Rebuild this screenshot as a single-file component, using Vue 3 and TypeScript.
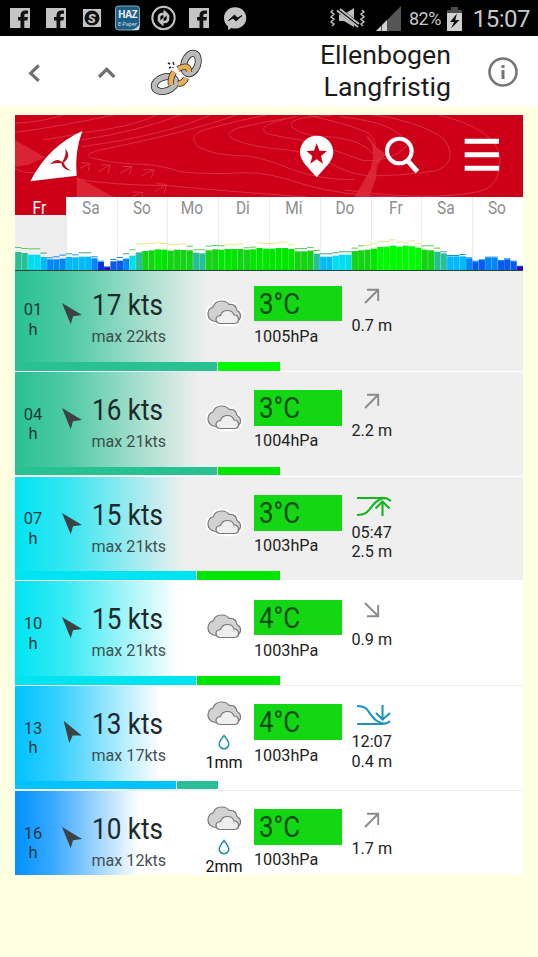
<script setup lang="ts">
interface Slot {
  hour: string
  dir: number
  wind: number
  gust: number
  color: string
  fade: number
  windBar: number
  gustBar: number
  gustColor: string
  rain?: string
  temp: number
  hpa: number
  tide: 'up' | 'down' | 'high' | 'low'
  tideTime?: string
  level: string
  night: boolean
}

const slots: Slot[] = [
  { hour: '01', dir: 0, wind: 17, gust: 22, color: '#28c191', fade: 192, windBar: 202, gustBar: 61.5, gustColor: '#00fa00', temp: 3, hpa: 1005, tide: 'up', level: '0.7 m', night: true },
  { hour: '04', dir: 0, wind: 16, gust: 21, color: '#28c191', fade: 184, windBar: 202, gustBar: 61.5, gustColor: '#00e600', temp: 3, hpa: 1004, tide: 'up', level: '2.2 m', night: true },
  { hour: '07', dir: 0, wind: 15, gust: 21, color: '#00e4f2', fade: 170, windBar: 181, gustBar: 82.5, gustColor: '#00e600', temp: 3, hpa: 1003, tide: 'high', tideTime: '05:47', level: '2.5 m', night: true },
  { hour: '10', dir: 0, wind: 15, gust: 21, color: '#00e4f2', fade: 164, windBar: 181, gustBar: 82.5, gustColor: '#00e600', temp: 4, hpa: 1003, tide: 'down', level: '0.9 m', night: false },
  { hour: '13', dir: 8, wind: 13, gust: 17, color: '#00c3ff', fade: 146, windBar: 161, gustBar: 40.5, gustColor: '#28be96', rain: '1mm', temp: 4, hpa: 1003, tide: 'low', tideTime: '12:07', level: '0.4 m', night: false },
  { hour: '16', dir: 0, wind: 10, gust: 12, color: '#0091ff', fade: 124, windBar: 120, gustBar: 20, gustColor: '#0091ff', rain: '2mm', temp: 3, hpa: 1003, tide: 'up', level: '1.7 m', night: false },
]

const days = ['Fr', 'Sa', 'So', 'Mo', 'Di', 'Mi', 'Do', 'Fr', 'Sa', 'So']

const palette: Record<string, string> = {
  t: '#28be96', c: '#00dcf0', s: '#00b9ff', b: '#0087f5', r: '#0a5af0', d: '#0a32dc', p: '#3c00b4',
  g: '#14d214', h: '#00e600', l: '#00fa00', y: '#e6e678', q: '#50c850',
}

const speeds = [
  54, 51, 46, 46, 39, 32, 32, 34, 39, 38, 40, 40, 35, 24, 9, 26, 28, 34, 43, 53, 57, 59, 62, 61, 58, 61, 60, 59, 52, 50, 59, 62,
  61, 63, 63, 63, 61, 62, 66, 64, 64, 66, 66, 63, 56, 56, 58, 49, 40, 40, 43, 46, 46, 57, 59, 61, 64, 69, 70, 73, 70, 73, 71, 67,
  61, 59, 55, 50, 41, 41, 41, 35, 25, 30, 37, 37, 28, 32, 26, 12,
]
const colorKeys = 'ttccsbbbssssbdprrbct' + 'gghhggggttgghhhgghhh' + 'hhhhgggtsscccggghlll' + 'llllggttsssbrrbbrrrp'

const gustHeights = [
  69, 66, 65, 65, 52, 38, 41, 46, 50, 47, 53, 53, 41, 28, 11, 33, 39, 50, 62, 80, 80, 81, 83, 81, 77, 78, 80, 73, 62, 62, 73, 75,
  74, 77, 77, 79, 68, 70, 83, 81, 81, 83, 85, 77, 66, 66, 69, 60, 50, 50, 53, 56, 56, 67, 74, 76, 80, 86, 87, 92, 85, 83, 89, 80,
  74, 74, 67, 56, 45, 45, 48, 38, 28, 32, 40, 40, 30, 35, 28, 13,
]

const bars = speeds.map((h, i) => ({ h, color: palette[colorKeys[i]], gust: gustHeights[i] }))
const gustColor = (v: number): string => (v > 75 ? palette.y : v > 58 ? palette.q : v > 48 ? '#28a07d' : palette.b)
</script>

<template>
  <div class="screen">
    <div class="status">
      <svg class="status-icons" viewBox="0 0 245 36">
        <g v-for="x in [10, 46, 189]" :key="x" :transform="`translate(${x} 8)`">
          <rect width="20" height="20" fill="#c4c4c4" />
          <path d="M10.500 20v-7.500H8V9h2.500V7.500q0-5 5-5H18v3.300h-2q-1.700 0-1.700 1.700V9H18l-.6 3.500h-3.100V20z" fill="#111" />
        </g>
        <rect x="83" y="9" width="18" height="18" fill="#c4c4c4" />
        <circle cx="92" cy="18" r="7.500" fill="#111" />
        <text x="87.800" y="23" class="s-mark">S</text>
        <rect x="115.500" y="6" width="24" height="24" rx="3" fill="#1d6084" stroke="#8aa9ba" />
        <text x="118" y="17.500" class="haz" textLength="19.500">HAZ</text>
        <text x="118" y="25.700" class="paper" textLength="19">E-Paper</text>
        <path d="M131 30q5-1 8-5v5z" fill="#c9d4da" />
        <circle cx="163.500" cy="18" r="11.200" fill="none" stroke="#c4c4c4" stroke-width="2" />
        <path d="M159 21.500v-4q0-3.500 3.500-3.500h2M168 14.500v4q0 3.500-3.500 3.500h-2" fill="none" stroke="#c4c4c4" stroke-width="2.600" />
        <path d="M163.500 9.500l5 4.500-5 4.500zM163.500 17.500l-5 4.500 5 4.500z" fill="#c4c4c4" />
        <path d="M235 7.200c6.500 0 11.300 4.700 11.300 10.700S241.500 28.500 235 28.500q-2 0-3.500-.5l-3.500 2v-3.500c-2.500-2-4-5-4-8.500C224 12 228.700 7.200 235 7.200z" fill="#c4c4c4" />
        <path d="M228.500 20.500l6-5.500 3 3 4.500-2.500-6 5.500-3-3z" fill="#111" stroke="#111" />
      </svg>
      <div class="status-right">
        <svg class="mute" viewBox="0 0 36 24">
          <path d="M9 8.500h5L24 2v19l-10-6H9z" fill="#bdbdbd" />
          <path d="M8 3.500l20 15" stroke="#000" stroke-width="5" />
          <path d="M7 4.500l21 16.500M10 3l19 15" stroke="#bdbdbd" stroke-width="2" />
          <path d="M3 4l-2 2 3 2-3 3 3 2-3 3 3 2-2 2M32 4l2 2-3 2 3 3-3 2 3 3-3 2 2 2" fill="none" stroke="#bdbdbd" stroke-width="1.500" />
        </svg>
        <svg class="signal" viewBox="0 0 25 25">
          <path d="M0 25L25 0v25z" fill="#555" /><path d="M0 25l5-5v5zM6 25v-6l5-5v11z" fill="#d2d2d2" />
        </svg>
        <span class="pct">82%</span>
        <svg class="battery" viewBox="0 0 15 24">
          <path d="M4 0h7v3h4v5H0V3h4z" fill="#4c4c4c" /><path d="M0 6h15v18H0z" fill="#d0d0d0" />
          <path d="M10 6.500L3 15h4l-3 6.500L12.500 13H8.300z" fill="#111" />
        </svg>
        <span class="clock">15:07</span>
      </div>
    </div>

    <header class="appbar">
      <svg class="nav" viewBox="0 0 190 71">
        <path d="M38.700 29.500l-8 7.700 8 7.700M99 41l7.700-7.700 7.700 7.700" fill="none" stroke="#707070" stroke-width="3.200" />
        <g fill="none">
          <ellipse cx="191" cy="27.500" rx="6.800" ry="10.500" transform="rotate(20 191 27.500)" stroke="#222" stroke-width="7" />
          <ellipse cx="191" cy="27.500" rx="6.800" ry="10.500" transform="rotate(20 191 27.500)" stroke="#b9babc" stroke-width="5.400" />
          <ellipse cx="165" cy="48" rx="11" ry="7" transform="rotate(-18 165 48)" stroke="#222" stroke-width="7" />
          <ellipse cx="165" cy="48" rx="11" ry="7" transform="rotate(-18 165 48)" stroke="#b9babc" stroke-width="5.400" />
          <path d="M174 36q-4 6-3 13M178 33q11-6 11 3M178 48q6-1 8-6" stroke="#333" stroke-width="6.400" />
          <path d="M174 36q-4 6-3 13M178 33q11-6 11 3M178 48q6-1 8-6" stroke="#e9ad59" stroke-width="4.800" />
          <path d="M168 27l2 1M173 26l1 3M169 32l2-1M173 31v1" stroke="#222" stroke-width="1.400" />
        </g>
      </svg>
      <h1 class="title"><span>Ellenbogen</span><span>Langfristig</span></h1>
      <svg class="info" viewBox="0 0 30 30">
        <circle cx="15" cy="15" r="13.500" fill="none" stroke="#757575" stroke-width="2.600" />
        <path d="M13.500 8h3v3h-3zM13.500 13h3v9h-3z" fill="#757575" />
      </svg>
    </header>

    <main class="panel">
      <svg class="banner" viewBox="45 30 1524 246" preserveAspectRatio="none">
        <rect x="45" y="30" width="1524" height="246" fill="#ce0019" />
        <g fill="#da2435">
          <path d="M45 105l90 52-50 23-40 5zM230 215l110 61H230z" />
          <path d="M1098 95q12-4 17 12l14 20 30 20-28 35-3 38-20 56h-44l28-50 20-34 8-40-4-32z" />
        </g>
        <g fill="none" stroke="#da3040" stroke-width="3">
          <path d="M45 55Q130 50 190 30M45 82Q180 65 340 30M130 105Q190 95 250 83 400 65 470 30M245 105Q430 75 540 30M245 125Q500 90 630 30" />
          <path d="M710 30Q570 80 300 135q-60 15-20 25 80 18 150 18 60 4 110 22 90 10 190 3 80-2 180 35 120 35 280 38" />
          <path d="M800 30Q720 45 610 75q-50 20-15 50 45 28 150 28 60 10 130 40 100 35 190 30" />
          <path d="M860 40Q790 50 710 70q-45 18-5 35 60 23 160 30 70 10 110 30 60 40 130 48 100 0 200-15 60-20 40-75-10-35-110-68-60-20-120-26" />
          <path d="M890 35Q760 60 800 85q60 15 100 20 90 24 190 62 80 5 130-42-10-70-200-90" />
          <path d="M995 32Q850 35 878 68q40 30 120 28 90 10 120 50 20-30-10-60-60-30-183-54M1315 30q170 40 185 125 5 90-65 105-150 30-400-5" />
          <path d="M230 222q100 18 270 20 220 20 420 34M45 190q20 15 65 13" />
          <path d="M240 190l28-15m-25-3 26 3-4 22M295 200l35-20m-28 0 29 0-7 25M360 205l34-20m-29-1 30 1-7 25M422 214l39-20m-32 0 33 0-8 26M465 260l34-22m-30-2 31 2-8 27M395 276l32-15m-30 0 32 1-3 14" />
        </g>
        <path d="M247 78Q143 125 91 229l139-17q-7-70 17-134z" fill="#fff" />
        <path d="M187 169q13-17 9-38 19 20-3 41zM184 170q-12-13-35 8 25-6 35-3zM183 170q4 26 30 27-17-7-23-27z" fill="#b3101e" />
        <g transform="translate(804)">
          <path d="M146 92c28 0 50 22 50 50 0 27-25 45-50 75-25-30-50-48-50-75 0-28 22-50 50-50z" fill="#fff" />
          <path d="M146 114l8 23 23 1-18 15 6 23-19-13-19 13 6-23-18-15 23-1z" fill="#ce0019" />
          <circle cx="394" cy="138" r="37" fill="none" stroke="#fff" stroke-width="12" />
          <path d="M418 166l30 34" stroke="#fff" stroke-width="15" />
          <path d="M590 109h103M590 149h103M590 190h103" stroke="#fff" stroke-width="15" />
        </g>
      </svg>

      <section class="overview">
        <div class="days">
          <div v-for="(d, i) in days" :key="i" class="day" :class="{ active: i === 0 }">
            <span class="day-name">{{ d }}</span>
          </div>
        </div>
        <svg class="chart" viewBox="0 0 80 93" preserveAspectRatio="none">
          <g v-for="(b, i) in bars" :key="i">
            <rect :x="i" :y="93 - b.h" width="1.010" :height="b.h" :fill="b.color" />
            <rect :x="i" :y="93 - b.h" width=".1" :height="b.h" fill="#fff" opacity=".25" />
            <rect :x="i" :y="93 - b.gust" width="1" height="2.800" :fill="gustColor(b.gust)" />
          </g>
        </svg>
      </section>

      <section class="slots">
        <article v-for="s in slots" :key="s.hour" class="slot" :class="{ night: s.night }">
          <div class="glow" :style="{ width: s.fade + 'px', background: `linear-gradient(90deg, ${s.color}, ${s.color}c8 30%, ${s.color}00)` }" />
          <div class="cells">
            <div class="hour">{{ s.hour }}<br>h</div>
            <div class="dir">
              <svg viewBox="0 0 20 22" width="20" height="22" :style="{ transform: `rotate(${s.dir}deg)` }">
                <path d="M0 0l20 12-9 1.300L8.700 21.300z" fill="#3d4245" />
              </svg>
            </div>
            <div class="wind">
              <div class="knots"><span>{{ s.wind }} kts</span></div>
              <div class="max">max {{ s.gust }}kts</div>
            </div>
            <div class="sky" :class="{ wet: s.rain }">
              <svg class="cloud" viewBox="0 0 40 30">
                <g stroke-linejoin="round">
                  <path d="M11 24.500Q4 23 4 17q0-5.500 5-7 2-6 8.500-6 5.500 0 7.500 3.500 7-1 8 6 4 2 3.500 6.500-1 4-6.500 5z" fill="#fff" stroke="#fff" stroke-width="4.500" />
                  <path d="M16 27q-4-1-4-4.500 0-4 5-4.500 1-5.500 6.500-5.500 5 0 6.500 5 4 0 4 4.500 0 4-4 5z" fill="#fff" stroke="#fff" stroke-width="4.500" />
                  <path d="M11 24.500Q4 23 4 17q0-5.500 5-7 2-6 8.500-6 5.500 0 7.500 3.500 7-1 8 6 4 2 3.500 6.500-1 4-6.500 5z" fill="#d2d2d2" stroke="#777" stroke-width="1.200" />
                  <path d="M16 26.500q-4-.5-4-4t4.500-4q1.500-5 7-5 5 0 6.500 4.500 4.500 0 4.500 4.500 0 4-4.500 4z" fill="#efefef" stroke="#777" stroke-width="1.200" />
                </g>
              </svg>
              <template v-if="s.rain">
                <svg class="drop" viewBox="0 0 12 16">
                  <path d="M6 1.500q4.800 6 4.800 8.500A4.700 4.700 0 0 1 6 14.700 4.700 4.700 0 0 1 1.200 10Q1.200 7.500 6 1.500z" fill="none" stroke="#1b93ab" stroke-width="1.500" />
                </svg>
                <div class="mm">{{ s.rain }}</div>
              </template>
            </div>
            <div class="air">
              <div class="temp"><span>{{ s.temp }}°C</span></div>
              <div class="hpa">{{ s.hpa }}hPa</div>
            </div>
            <div class="tide" :class="s.tide">
              <svg v-if="s.tide === 'up'" class="trend" viewBox="0 0 16 16"><path d="M1 15L14 2M3 1.800h11.200V13" /></svg>
              <svg v-else-if="s.tide === 'down'" class="trend" viewBox="0 0 16 16"><path d="M1 1l13 13M3 14.200h11.200V3" /></svg>
              <svg v-else-if="s.tide === 'high'" class="extreme" viewBox="0 0 36 22"><path d="M1 3h23q6-1 11 3M1 20c10 0 11-4 16-10 3-4 6-6 12-7M26.500 21V7M19.500 13.500l7-7 7 7" /></svg>
              <svg v-else class="extreme" viewBox="0 0 36 22"><path d="M1 20h24q6 0 9-3M1 2c9 0 10 3 14 9 4 5 7 8 15 9M26.500 1v14M20 9l6.500 6.500L34 9" /></svg>
              <div v-if="s.tideTime">{{ s.tideTime }}</div>
              <div>{{ s.level }}</div>
            </div>
          </div>
          <div class="strip">
            <i :style="{ width: s.windBar + 'px', background: s.color }" />
            <i class="gap" />
            <i :style="{ width: s.gustBar + 'px', background: s.gustColor }" />
          </div>
        </article>
      </section>
    </main>
  </div>
</template>

<style>
body { background: #ffffe1; }
</style>

<style scoped>
* { box-sizing: border-box; }
svg { display: block; flex: none; }
.screen { height: 957px; width: 538px; overflow: hidden; background: #ffffe1; font-family: Roboto, "Liberation Sans", sans-serif; color: #222; }
.status { height: 36px; background: #000; display: flex; justify-content: space-between; }
.status-icons { width: 245px; height: 36px; overflow: visible; }
.s-mark { font: italic 900 13px Roboto, sans-serif; fill: #c4c4c4; }
.haz { font: 700 10px "Open Sans", sans-serif; fill: #e6eef2; }
.paper { font: 5.500px "Open Sans", sans-serif; fill: #d4e0e6; }
.status-right { display: flex; align-items: center; color: #c8c8c8; padding-right: 8px; padding-top: 1px; }
.mute { width: 36px; height: 24px; margin-right: 10px; margin-top: -1px; }
.signal { width: 25px; height: 25px; margin-right: 8px; }
.pct { font-size: 18px; width: 35px; letter-spacing: -.5px; margin-right: 3px; }
.battery { width: 15px; height: 24px; margin-right: 10px; }
.clock { font-size: 24px; width: 58px; text-align: right; letter-spacing: -.5px; white-space: nowrap; padding-top: 1px; }
.appbar { height: 71px; background: #fff; display: flex; align-items: center; padding-right: 20px; }
.nav { width: 190px; height: 71px; overflow: visible; }
.title { margin: 0 37px 0 auto; font-weight: 400; font-size: 26.700px; line-height: 31.500px; color: #1c1c1c; text-align: right; }
.title span { display: block; }
.info { width: 30px; height: 30px; }
.panel { margin: 8px 0 0 15px; width: 508px; height: 760px; overflow: hidden; background: #fff; }
.banner { width: 508px; height: 82px; }
.overview { height: 73.500px; border-bottom: 1.500px solid #1c4630; display: grid; background: #fff; }
.days { grid-area: 1 / 1; display: grid; grid-template-columns: repeat(10, 1fr); }
.day { border-left: 1px solid #ececec; text-align: center; color: #8e8e8e; font-size: 18px; line-height: 21px; }
.day-name { display: block; margin-left: -2px; transform: scaleX(.86); }
.day.active { background: linear-gradient(#ce0019 18px, #eee 18px); color: #fff; border: 0; }
.chart { grid-area: 1 / 1; align-self: end; width: 508px; height: 31px; }
.slots { height: 604.500px; overflow: hidden; }
.slot { height: 104.700px; display: grid; grid-template: 94.700px 8.700px / 1fr; background: #fff; border-bottom: 1.300px solid #eee; }
.slot.night { background: #efefef; border-color: #fff; }
.slot:first-child { margin-top: -3.200px; }
.glow { grid-area: 1 / 1 / 3 / 2; }
.cells { grid-area: 1 / 1; display: grid; grid-template-columns: 47px 30px 105px 57px 98px 1fr; }
.hour { width: 36px; padding-top: 32.800px; font-size: 16.500px; line-height: 19.500px; text-align: center; color: #24383c; }
.dir { padding-top: 36px; }
.wind { padding-top: 20px; margin-left: -.5px; }
.knots { font-size: 29.500px; line-height: 36px; color: #1c2a2a; white-space: nowrap; }
.knots span { display: inline-block; transform: scaleX(.885); transform-origin: 0 50%; }
.max { font-size: 16.100px; line-height: 20px; margin-top: 4px; color: #344040; opacity: .9; }
.sky { display: flex; flex-direction: column; align-items: center; width: 54px; padding-top: 30px; }
.sky.wet { padding-top: 12px; }
.cloud { width: 40px; height: 30px; }
.drop { width: 12px; height: 16px; margin-top: 6px; }
.mm { font-size: 16px; line-height: 16px; margin-top: 4.500px; color: #111; }
.air { padding-top: 18.400px; }
.temp { width: 88px; height: 35.600px; background: #14d714; font-size: 29.500px; line-height: 36px; padding-left: 5px; color: #0b4b14; white-space: nowrap; }
.temp span { display: inline-block; transform: scaleX(.88); transform-origin: 0 50%; }
.hpa { font-size: 16.200px; line-height: 20px; margin-top: 5.500px; white-space: nowrap; }
.tide { font-size: 16.200px; line-height: 19.500px; padding-top: 20px; margin-left: -.5px; }
.tide svg { fill: none; stroke: #8b8b8b; stroke-width: 1.900; }
.trend { width: 16px; height: 16px; margin: 1px 0 11.500px 12px; }
.extreme { width: 36px; height: 22px; margin: -2px 0 6px 4px; }
.tide.high svg { stroke: #12b51e; stroke-width: 2.100; }
.tide.low svg { stroke: #1c94bd; stroke-width: 2.100; }
.strip { grid-area: 2 / 1; display: flex; }
.strip i { height: 8.700px; }
.strip .gap { width: 1.300px; background: #fff; }
</style>
